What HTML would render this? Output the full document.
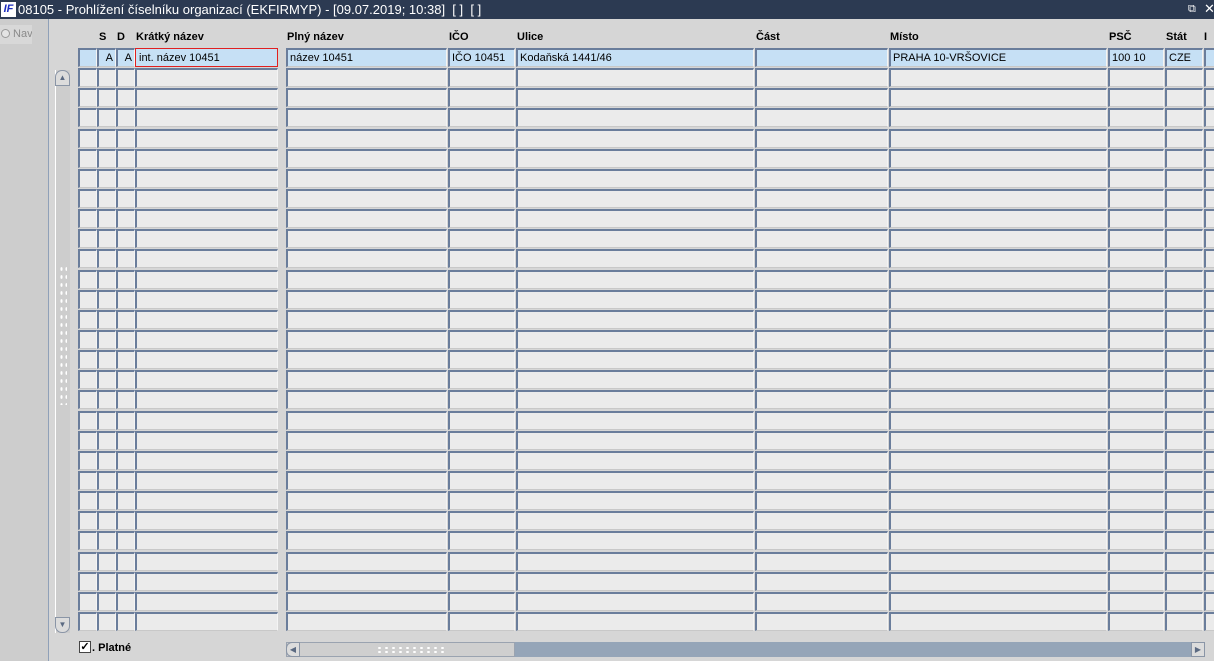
<!DOCTYPE html>
<html><head><meta charset="utf-8"><style>
*{margin:0;padding:0;box-sizing:border-box}
body{width:1214px;height:661px;overflow:hidden;background:#d6d6d6;font-family:"Liberation Sans",Arial,sans-serif;font-size:11px;position:relative}
.a{position:absolute}
.title{left:0;top:0;width:1214px;height:19px;background:#2c3a52;color:#fff;font-size:13px;line-height:19px;padding-left:18px;white-space:nowrap}
.logo{left:1px;top:2px;width:15px;height:15px;background:#fff;color:#1a2bbf;font-weight:bold;font-style:italic;font-size:11px;line-height:15px;text-align:center}
.c{position:absolute;background:#ebebeb;border-top:2px solid #6a7d9b;border-left:2px solid #6a7d9b;border-right:1px solid #f4f4f4;border-bottom:1px solid #c8c8c8;height:19px;font-size:11px;line-height:15px;padding:1px 0 0 2px;white-space:nowrap;overflow:hidden;color:#000}
.h{position:absolute;top:31px;font-weight:bold;font-size:11px;color:#000}
</style></head><body>
<div class="a title">08105 - Prohlížení číselníku organizací (EKFIRMYP) - [09.07.2019; 10:38]&nbsp; [ ]&nbsp; [ ]</div>
<div class="a logo">IF</div>
<div class="a" style="left:1188px;top:3px;color:#fff;font-size:11px">&#x29C9;</div>
<div class="a" style="left:1204px;top:1px;color:#fff;font-size:13px">✕</div>
<div class="a" style="left:0;top:19px;width:48px;height:642px;background:#cdcdcd"></div>
<div class="a" style="left:48px;top:19px;width:1px;height:642px;background:#8fa0b8"></div>
<div class="a" style="left:0;top:25px;width:32px;height:19px;background:#d8d8d8;color:#8a8a8a;font-size:11px;line-height:19px;padding-left:1px;white-space:nowrap;overflow:hidden"><span style="display:inline-block;width:9px;height:9px;border-radius:50%;border:1px solid #999;background:#e4e4e4;vertical-align:-1px"></span>&nbsp;Nav</div>
<div class="a" style="left:55px;top:70px;width:15px;height:563px;background:#cdcdcd;border-left:1px solid #fff"></div>
<div class="a" style="left:55px;top:70px;width:15px;height:16px;background:#dcdcdc;border:1px solid #8a95a6;border-radius:7px 7px 0 0;text-align:center;color:#5b6a82;font-size:8px;line-height:14px">▲</div>
<div class="a" style="left:55px;top:617px;width:15px;height:16px;background:#dcdcdc;border:1px solid #8a95a6;border-radius:0 0 7px 7px;text-align:center;color:#5b6a82;font-size:8px;line-height:14px">▼</div>
<div class="a" style="left:59px;top:265px;width:8px;height:140px;background-image:radial-gradient(#fff 30%,transparent 35%);background-size:5px 8px"></div>
<div id="g"></div>
<div class="a" style="left:79px;top:641px;width:12px;height:12px;background:#fff;border:1px solid #444;font-size:11px;line-height:10px;font-weight:bold;text-align:center">✓</div>
<div class="a" style="left:92px;top:642px;font-weight:bold;font-size:11px">. Platné</div>
<div class="a" style="left:286px;top:642px;width:919px;height:15px;background:#95a5b8"></div>
<div class="a" style="left:286px;top:642px;width:229px;height:15px;background:#cfcfcf;border:1px solid #9aa3b0"></div>
<div class="a" style="left:286px;top:642px;width:14px;height:15px;background:#dcdcdc;border:1px solid #8a95a6;border-radius:6px 0 0 6px;font-size:8px;line-height:13px;text-align:center;color:#5b6a82">◀</div>
<div class="a" style="left:376px;top:646px;width:68px;height:8px;background-image:radial-gradient(#fff 30%,transparent 35%);background-size:7px 4px"></div>
<div class="a" style="left:1191px;top:642px;width:14px;height:15px;background:#dcdcdc;border:1px solid #8a95a6;font-size:8px;line-height:13px;text-align:center;color:#5b6a82">▶</div>
<script>
var cols=[[78,19],[97,19],[116,19],[135,143],[286,161],[448,67],[516,238],[755,133],[889,218],[1108,56],[1165,38],[1204,12]];
var heads=["","S","D","Krátký název","Plný název","IČO","Ulice","Část","Místo","PSČ","Stát","I"];
var hx=[0,99,117,136,287,449,517,756,890,1109,1166,1204];
var r1=["","A","A","int. název 10451","název 10451","IČO 10451","Kodaňská 1441/46","","PRAHA 10-VRŠOVICE","100 10","CZE",""];
var h="";
for(var k=1;k<heads.length;k++)h+='<div class="h" style="left:'+hx[k]+'px">'+heads[k]+'</div>';
for(var i=0;i<29;i++){var t=Math.round(48+i*20.14);
for(var k=0;k<cols.length;k++){var s="left:"+cols[k][0]+"px;top:"+t+"px;width:"+cols[k][1]+"px;";
var txt="";
if(i==0){s+="background:#c6e0f5;";txt=r1[k];if(k==1||k==2)s+="text-align:right;padding-right:2px;";if(k==3)s+="border:1px solid #e02020;padding-top:2px;padding-left:3px;";}
h+='<div class="c" style="'+s+'">'+txt+'</div>';}}
document.getElementById("g").innerHTML=h;
</script>
</body></html>
